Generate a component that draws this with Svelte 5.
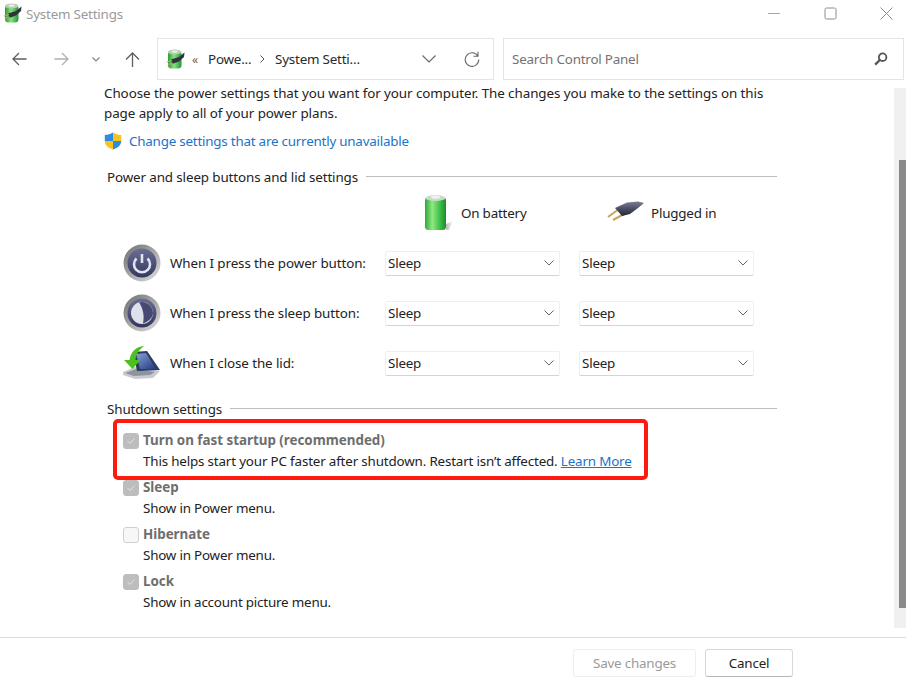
<script>
  const rows = [
    { id: 'power', label: 'When I press the power button:' },
    { id: 'sleep', label: 'When I press the sleep button:' },
    { id: 'lid', label: 'When I close the lid:' }
  ];
  const options = [
    { title: 'Sleep', desc: 'Show in Power menu.', checked: true },
    { title: 'Hibernate', desc: 'Show in Power menu.', checked: false },
    { title: 'Lock', desc: 'Show in account picture menu.', checked: true }
  ];
</script>

{#snippet battIcon()}
  <svg width="19" height="20" viewBox="0 0 19 20">
    <defs>
      <linearGradient id="tb" x1="0" x2="1" y1="0" y2="0">
        <stop offset="0" stop-color="#2c9a38" />
        <stop offset="0.45" stop-color="#86e27e" />
        <stop offset="1" stop-color="#27913a" />
      </linearGradient>
    </defs>
    <rect x="2" y="2" width="13.5" height="17.5" rx="3.5" fill="url(#tb)" />
    <ellipse cx="8.7" cy="3" rx="6.7" ry="2.4" fill="#b9cdb6" />
    <ellipse cx="8.7" cy="2.6" rx="3" ry="1.2" fill="#eef2ee" />
    <path d="M5 10.5 L13 8 L18.5 3.5 L18 8 L13 12.5 L6 15 Z" fill="#2f3340" />
    <path d="M0.8 13 L6 11.5 M1.8 15.5 L7 14" stroke="#c9a45c" stroke-width="1.1" />
  </svg>
{/snippet}

{#snippet chevron()}
  <svg class="chev" width="10" height="6" viewBox="0 0 10 6">
    <path d="M0.5 0.5 L5 5 L9.5 0.5" fill="none" stroke="#666" stroke-width="1" />
  </svg>
{/snippet}

{#snippet check(on)}
  <span class="box" class:on>
    {#if on}
      <svg width="10" height="8" viewBox="0 0 10 8">
        <path d="M1.5 4 L4 6.5 L8.5 1.5" fill="none" stroke="#e4e4e4" stroke-width="1" />
      </svg>
    {/if}
  </span>
{/snippet}

<div class="window">
  <header class="titlebar">
    <span class="title-icon">{@render battIcon()}</span>
    <span class="title">System Settings</span>
    <div class="controls">
      <svg width="13" height="13" viewBox="0 0 13 13"><path d="M0 6.5 H12" stroke="#a8a8a8" stroke-width="1" /></svg>
      <svg width="13" height="13" viewBox="0 0 13 13"><rect x="1" y="1" width="11" height="11" rx="1.5" fill="none" stroke="#8c8c8c" stroke-width="1" /></svg>
      <svg width="13" height="13" viewBox="0 0 13 13"><path d="M0.5 0.5 L12.5 12.5 M12.5 0.5 L0.5 12.5" stroke="#8c8c8c" stroke-width="1" /></svg>
    </div>
  </header>

  <nav class="navbar">
    <div class="nav-buttons">
      <svg class="nav-a" width="15" height="14" viewBox="0 0 15 14"><path d="M14.5 7 H1 M7 1 L1 7 L7 13" fill="none" stroke="#5f5f5f" stroke-width="1.3" /></svg>
      <svg class="nav-b" width="15" height="14" viewBox="0 0 15 14"><path d="M0.5 7 H14 M8 1 L14 7 L8 13" fill="none" stroke="#b0b0b0" stroke-width="1.3" /></svg>
      <svg class="nav-c" width="8" height="5" viewBox="0 0 8 5"><path d="M0.5 0.5 L4 4 L7.5 0.5" fill="none" stroke="#808080" stroke-width="1.1" /></svg>
      <svg class="nav-d" width="15" height="15" viewBox="0 0 15 15"><path d="M7.5 15 V1 M1 7.5 L7.5 1 L14 7.5" fill="none" stroke="#5f5f5f" stroke-width="1.3" /></svg>
    </div>
    <div class="address">
      <span class="addr-icon">{@render battIcon()}</span>
      <span class="addr-quote">«</span>
      <span class="addr-a">Powe...</span>
      <svg class="addr-sep" width="5" height="8" viewBox="0 0 5 8"><path d="M0.5 0.5 L4 4 L0.5 7.5" fill="none" stroke="#555" stroke-width="1" /></svg>
      <span class="addr-b">System Setti...</span>
      <svg class="addr-down" width="14" height="8" viewBox="0 0 14 8"><path d="M0.5 0.5 L7 7 L13.5 0.5" fill="none" stroke="#666" stroke-width="1.1" /></svg>
      <svg class="addr-refresh" width="16" height="16" viewBox="0 0 16 16"><path d="M13.8 5 A6.8 6.8 0 1 0 14.8 8.5 M14 0.8 V5.2 H9.6" fill="none" stroke="#666" stroke-width="1.1" /></svg>
    </div>
    <div class="search">
      <span>Search Control Panel</span>
      <svg width="14" height="14" viewBox="0 0 14 14"><circle cx="8.6" cy="5.2" r="3.8" fill="none" stroke="#555" stroke-width="1.8" /><path d="M5.8 8 L1.2 12.6" stroke="#555" stroke-width="2.4" /></svg>
    </div>
  </nav>

  <div class="body">
    <main class="content">
      <p class="intro">Choose the power settings that you want for your computer. The changes you make to the settings on this page apply to all of your power plans.</p>
      <div class="uac">
        <svg width="18" height="18" viewBox="0 0 18 18">
          <path d="M9 0.5 C6.5 2.2 4 2.8 0.8 3 V9 H9 Z" fill="#2f8be0" />
          <path d="M9 0.5 C11.5 2.2 14 2.8 17.2 3 V9 H9 Z" fill="#f6c21c" />
          <path d="M0.8 9 H9 V17.5 C4 16 0.8 13 0.8 9 Z" fill="#f6c21c" />
          <path d="M9 9 H17.2 C17.2 13 14 16 9 17.5 Z" fill="#2f8be0" />
        </svg>
        <span class="link">Change settings that are currently unavailable</span>
      </div>

      <div class="section sec-power"><span>Power and sleep buttons and lid settings</span><i></i></div>

      <div class="col-heads">
        <div class="head head-batt">
          <svg width="30" height="38" viewBox="0 0 30 38">
            <defs>
              <linearGradient id="bt" x1="0" x2="1" y1="0" y2="0">
                <stop offset="0" stop-color="#2fa83a" />
                <stop offset="0.35" stop-color="#8fe980" />
                <stop offset="0.7" stop-color="#3fc04a" />
                <stop offset="1" stop-color="#1d8a2b" />
              </linearGradient>
              <linearGradient id="bs" x1="0" x2="1" y1="0" y2="0">
                <stop offset="0" stop-color="#b8b8b8" />
                <stop offset="1" stop-color="#ffffff" />
              </linearGradient>
            </defs>
            <path d="M22 30 L29 27 L25 36 L22 36 Z" fill="url(#bs)" />
            <rect x="1" y="3" width="21" height="33" rx="3.5" fill="url(#bt)" />
            <ellipse cx="11.5" cy="4" rx="10" ry="3" fill="#c6dcc8" />
            <ellipse cx="11.5" cy="3" rx="4.5" ry="1.8" fill="#eef2ee" />
          </svg>
          <span>On battery</span>
        </div>
        <div class="head head-plug">
          <svg width="38" height="24" viewBox="0 0 38 24">
            <defs>
              <linearGradient id="pl" x1="0" x2="0" y1="0" y2="1">
                <stop offset="0" stop-color="#7a7f96" />
                <stop offset="0.5" stop-color="#4a4e66" />
                <stop offset="1" stop-color="#23252f" />
              </linearGradient>
            </defs>
            <path d="M2 16 L13 8 M7 19 L18 13" stroke="#c9a45c" stroke-width="2" />
            <path d="M9 7 L21 1.5 L32 0.5 L38 2 L32 7 L24 13 L16 15 Z" fill="url(#pl)" />
          </svg>
          <span>Plugged in</span>
        </div>
      </div>

      {#each rows as row}
        <div class="row">
          <span class="row-icon">
            {#if row.id === 'lid'}
              <svg width="38" height="34" viewBox="0 0 38 34">
                <defs>
                  <linearGradient id="lidg" x1="0" x2="1" y1="0" y2="1">
                    <stop offset="0" stop-color="#8aa0d8" />
                    <stop offset="1" stop-color="#1f3a80" />
                  </linearGradient>
                </defs>
                <path d="M0 26 L12 21 L37 25 L30 32 L12 33 L0 29 Z" fill="#c8ccd0" />
                <path d="M2 27 L13 23 L32 26 L27 29 L11 30 Z" fill="#8d949c" />
                <path d="M10 6 L24 5 L37 24 L14 25 Z" fill="#2b3a5e" />
                <path d="M13 8 L23 7 L33 23 L17 23 Z" fill="url(#lidg)" />
                <path d="M21 0 C13 1 8 5 6.5 14 L1 14 L9.5 23 L17.5 14 L12.5 14 C13 8 16 4 21 0 Z" fill="#4cc021" />
              </svg>
            {:else}
              <svg width="38" height="38" viewBox="0 0 38 38">
                <defs>
                  <linearGradient id="ring{row.id}" x1="0" x2="1" y1="0" y2="1">
                    <stop offset="0" stop-color="#6d6d6d" />
                    <stop offset="1" stop-color="#e0e0e0" />
                  </linearGradient>
                  <linearGradient id="disc{row.id}" x1="0" x2="0" y1="0" y2="1">
                    <stop offset="0" stop-color="#6b6e94" />
                    <stop offset="1" stop-color="#33365f" />
                  </linearGradient>
                </defs>
                <circle cx="19" cy="19" r="18.5" fill="url(#ring{row.id})" />
                <circle cx="19" cy="19" r="14.5" fill="url(#disc{row.id})" />
                {#if row.id === 'power'}
                  <path d="M13.5 14.5 A8 8 0 1 0 24.5 14.5" fill="none" stroke="#e2e4ee" stroke-width="2.6" />
                  <path d="M19 10 V19" stroke="#e2e4ee" stroke-width="2.6" />
                {:else}
                  <circle cx="19" cy="19" r="11" fill="#dfe1ea" />
                  <path d="M16 8.5 C19 13 22 20 20 29.5 C25 28 30 24 30 19 C30 13 25 8 19 8 Z" fill="#464a72" />
                {/if}
              </svg>
            {/if}
          </span>
          <span class="row-label">{row.label}</span>
          <div class="select sel-1"><span>Sleep</span>{@render chevron()}</div>
          <div class="select sel-2"><span>Sleep</span>{@render chevron()}</div>
        </div>
      {/each}

      <div class="section sec-shut"><span>Shutdown settings</span><i></i></div>

      <div class="highlight">
        <div class="option">
          {@render check(true)}
          <div>
            <div class="opt-title">Turn on fast startup (recommended)</div>
            <div class="opt-desc fast">This helps start your PC faster after shutdown. Restart isn’t affected. <span class="learn">Learn More</span></div>
          </div>
        </div>
      </div>

      {#each options as opt}
        <div class="option">
          {@render check(opt.checked)}
          <div>
            <div class="opt-title">{opt.title}</div>
            <div class="opt-desc">{opt.desc}</div>
          </div>
        </div>
      {/each}
    </main>
    <div class="track"><div class="thumb"></div></div>
  </div>

  <footer class="footer">
    <div class="btn disabled">Save changes</div>
    <div class="btn cancel">Cancel</div>
  </footer>
</div>

<style>
  :global(body) {
    margin: 0;
    background: #fff;
  }

  .window {
    width: 906px;
    height: 683px;
    display: flex;
    flex-direction: column;
    font-family: "Noto Sans", "Open Sans", sans-serif;
    font-size: 13.4px;
    letter-spacing: -0.2px;
    color: #222;
    overflow: hidden;
  }

  .titlebar {
    height: 38px;
    flex: none;
    display: flex;
    align-items: flex-start;
  }

  .title-icon {
    margin: 3px 0 0 3px;
    height: 20px;
  }

  .title {
    margin: 4px 0 0 4px;
    color: #9a9a9a;
    line-height: 20px;
  }

  .controls {
    margin: 7px 13px 0 auto;
    display: flex;
    gap: 43px;
  }

  .navbar {
    height: 42px;
    flex: none;
    display: flex;
  }

  .nav-buttons {
    width: 157px;
    flex: none;
    display: flex;
    align-items: center;
  }

  .nav-a { margin-left: 12px; }
  .nav-b { margin-left: 27px; }
  .nav-c { margin-left: 23px; }
  .nav-d { margin-left: 25px; }

  .address,
  .search {
    box-sizing: border-box;
    height: 42px;
    border: 1px solid #e4e4e4;
    display: flex;
    align-items: center;
  }

  .address {
    width: 337px;
    color: #2a2a2a;
  }

  .addr-icon { margin-left: 8px; height: 20px; }
  .addr-quote { margin-left: 7px; width: 10px; color: #666; font-size: 12px; }
  .addr-a { margin-left: 6px; width: 48px; white-space: nowrap; }
  .addr-sep { margin-left: 4px; }
  .addr-b { margin-left: 10px; width: 141px; white-space: nowrap; }
  .addr-down { margin-left: 6px; }
  .addr-refresh { margin-left: 28px; }

  .search {
    width: 401px;
    margin-left: 9px;
    padding: 0 15px 0 8px;
    justify-content: space-between;
    color: #737373;
  }

  .body {
    flex: 1;
    display: flex;
    min-height: 0;
  }

  .content {
    width: 790px;
    flex: none;
    padding: 3px 0 0 104px;
    box-sizing: border-box;
  }

  .intro {
    margin: 0;
    width: 672px;
    line-height: 20px;
    letter-spacing: -0.07px;
  }

  .uac {
    display: flex;
    align-items: center;
    gap: 7px;
    margin-top: 8px;
    height: 20px;
  }

  .link {
    color: #1a73c9;
    letter-spacing: -0.22px;
  }

  .section {
    display: flex;
    align-items: center;
    gap: 8px;
    margin-left: 3px;
    width: 670px;
    height: 20px;
    letter-spacing: -0.12px;
  }

  .section i {
    flex: 1;
    height: 1px;
    background: #bdbdbd;
    margin-top: -2px;
  }

  .sec-power { margin-top: 16px; }
  .sec-shut { margin-top: 11px; }

  .col-heads {
    display: flex;
    height: 38px;
    margin-top: 7px;
    margin-bottom: 6px;
  }

  .head {
    display: flex;
    align-items: center;
  }

  .head-batt {
    margin-left: 320px;
    width: 182px;
    gap: 7px;
  }

  .head-plug {
    gap: 7px;
  }

  .row {
    display: flex;
    align-items: center;
    height: 50px;
  }

  .row-icon {
    width: 38px;
    margin-left: 19px;
    display: flex;
    flex: none;
  }

  .row-label {
    margin-left: 9px;
    width: 215px;
    flex: none;
    letter-spacing: -0.1px;
  }

  .select {
    box-sizing: border-box;
    width: 175px;
    height: 25px;
    flex: none;
    display: flex;
    align-items: center;
    justify-content: space-between;
    padding: 0 5px 0 2px;
    border: 1px solid #efefef;
    border-bottom: 1px solid #d4d4d4;
    border-radius: 2px;
  }

  .sel-2 {
    margin-left: 19px;
  }

  .highlight {
    box-sizing: border-box;
    width: 535px;
    height: 61px;
    margin: 0 0 -3px 9px;
    border: 4px solid #ff1a0f;
    border-radius: 5px;
    padding: 7px 0 0 6px;
  }

  .highlight .option {
    margin: 0;
  }

  .option {
    display: flex;
    gap: 4px;
    margin: 0 0 5px 19px;
    height: 42px;
    line-height: 21px;
  }

  .box {
    box-sizing: border-box;
    width: 16px;
    height: 16px;
    margin-top: 3px;
    flex: none;
    border: 1px solid #d0d0d0;
    background: #f7f7f7;
    border-radius: 3px;
    display: flex;
    align-items: center;
    justify-content: center;
  }

  .box.on {
    background: #bdbdbd;
    border-color: #bdbdbd;
  }

  .opt-title {
    font-weight: 700;
    color: #6e6e6e;
    letter-spacing: -0.02px;
  }

  .fast {
    letter-spacing: -0.17px;
  }

  .learn {
    color: #1a73c9;
    text-decoration: underline;
  }

  .track {
    width: 12px;
    height: 540px;
    margin: 8px 0 0 104px;
    flex: none;
    background: #f0f0f0;
    display: flex;
    justify-content: flex-end;
  }

  .thumb {
    width: 7px;
    height: 448px;
    margin-top: 72px;
    background: #8a8a8a;
  }

  .footer {
    height: 46px;
    flex: none;
    border-top: 1px solid #dcdcdc;
    display: flex;
    justify-content: flex-end;
    gap: 9px;
    padding: 11px 113px 0 0;
    box-sizing: border-box;
  }

  .btn {
    box-sizing: border-box;
    height: 28px;
    display: flex;
    align-items: center;
    justify-content: center;
    border-radius: 3px;
  }

  .disabled {
    width: 123px;
    border: 1px solid #eeeeee;
    color: #9a9a9a;
  }

  .cancel {
    width: 88px;
    border: 1px solid #d8d8d8;
    border-bottom-color: #b5b5b5;
    color: #222;
  }
</style>
